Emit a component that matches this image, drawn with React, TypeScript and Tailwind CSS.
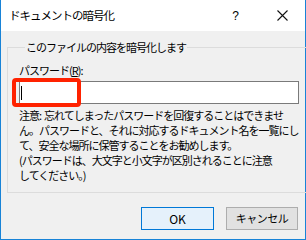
export default function App() {
  const font = { fontFamily: '"Noto Sans CJK JP", "Noto Sans", sans-serif' };
  const noteLines = [
    '注意:\u00a0 忘れてしまったパスワードを回復することはできませ',
    'ん。パスワードと、それに対応するドキュメント名を一覧にし',
    'て、安全な場所に保管することをお勧めします。',
    '(パスワードは、大文字と小文字が区別されることに注意',
    'してください。)',
  ];

  return (
    <div
      className="relative flex h-[240px] w-[306px] flex-col border-x border-b border-[#1883d7] bg-[#f0f0f0] text-[11px] text-black tracking-[-1px]"
      style={font}
    >
      {/* Title bar */}
      <div className="flex h-[31px] items-center bg-white">
        <span className="ml-[8px] text-[11.5px]">ドキュメントの暗号化</span>
        <span className="ml-auto mr-[38px] text-[12px] tracking-normal" style={{ fontFamily: '"Liberation Sans", sans-serif' }}>?</span>
        <svg className="mr-[17px]" width="11" height="11" viewBox="0 0 11 11">
          <path d="M0.5 0.5 L10.5 10.5 M10.5 0.5 L0.5 10.5" stroke="#111" strokeWidth="1.1" />
        </svg>
      </div>

      {/* Body */}
      <div className="flex flex-1 flex-col px-[6px] pt-[9px]">
        <fieldset className="border border-[#dcdcdc] pb-[9px] pl-[11px] pr-[10px]">
          <legend className="ml-[6px] h-[15px] px-[1px] leading-[15px]">このファイルの内容を暗号化します</legend>
          <div className="mt-[9px] h-[13px] leading-[13px]">
            パスワード(<span className="underline">R</span>):
          </div>
          <div className="mt-[4px] flex h-[23px] items-center border border-[#7a7a7a] bg-white">
            <div className="ml-[1px] h-[14px] w-px bg-black" />
          </div>
          <div className="mt-[4px] leading-[15px]">
            {noteLines.map((l) => (
              <div key={l} className="whitespace-nowrap">{l}</div>
            ))}
          </div>
        </fieldset>

        <div className="mt-[14px] flex justify-end gap-[12px] pr-[1px]">
          <button className="h-[23px] w-[73px] border border-[#0078d7] bg-[#e5f1fb] text-[12px] tracking-normal">OK</button>
          <button className="h-[23px] w-[72px] border border-[#adadad] bg-[#e1e1e1] text-[11px] tracking-[-0.5px]">キャンセル</button>
        </div>
      </div>

      {/* Red highlight annotation */}
      <div className="absolute left-[11px] top-[78px] h-[29px] w-[69px] rounded-[4px] border-[4px] border-[#ff2200]" />
    </div>
  );
}
